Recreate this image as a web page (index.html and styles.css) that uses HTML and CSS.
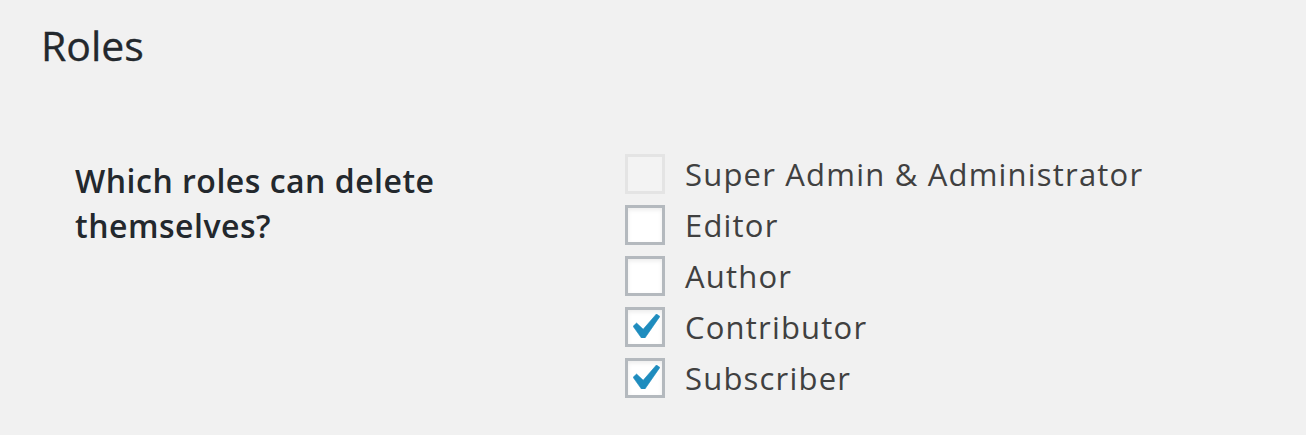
FILE: index.html
```html
<!DOCTYPE html>
<html lang="en">
<head>
<meta charset="utf-8">
<title>Roles</title>
<link rel="stylesheet" href="styles.css">
</head>
<body>
<div class="wrap">
  <h2 class="title">Roles</h2>
  <div class="form-row">
    <div class="row-label">Which roles can delete themselves?</div>
    <div class="options">
      <label class="option">
        <span class="box disabled"></span>
        <span class="opt-text">Super Admin &amp; Administrator</span>
      </label>
      <label class="option">
        <span class="box"></span>
        <span class="opt-text">Editor</span>
      </label>
      <label class="option">
        <span class="box"></span>
        <span class="opt-text">Author</span>
      </label>
      <label class="option">
        <span class="box checked"><svg class="check" viewBox="5.78 4.89 10.39 9.32" width="27" height="24"><path d="M14.83 4.89l1.34.94-5.81 8.38H9.02L5.78 9.67l1.34-1.25 2.57 2.4z"/></svg></span>
        <span class="opt-text">Contributor</span>
      </label>
      <label class="option">
        <span class="box checked"><svg class="check" viewBox="5.78 4.89 10.39 9.32" width="27" height="24"><path d="M14.83 4.89l1.34.94-5.81 8.38H9.02L5.78 9.67l1.34-1.25 2.57 2.4z"/></svg></span>
        <span class="opt-text">Subscriber</span>
      </label>
    </div>
  </div>
</div>
</body>
</html>
```
FILE: styles.css
```css
html, body {
  margin: 0;
  padding: 0;
  background: #f1f1f1;
}
body {
  font-family: "Open Sans", "Noto Sans", sans-serif;
  color: #23282d;
}
.wrap {
  padding: 0 0 0 41px;
}
.title {
  margin: 0;
  padding-top: 17px;
  font-size: 41px;
  font-weight: 400;
  line-height: 56px;
  color: #23282d;
  -webkit-text-stroke: 0.3px #23282d;
}
.form-row {
  display: flex;
  margin-top: 75px;
}
.row-label {
  width: 380px;
  padding-left: 34px;
  padding-top: 10px;
  font-size: 32px;
  font-weight: 600;
  letter-spacing: 0.5px;
  line-height: 45px;
  color: #23282d;
  box-sizing: content-box;
}
.options {
  margin-left: 170px;
  display: flex;
  flex-direction: column;
}
.option {
  display: flex;
  align-items: center;
  height: 51px;
  gap: 20px;
}
.box {
  width: 40px;
  height: 40px;
  box-sizing: border-box;
  border: 3px solid #b4b9be;
  background: #fff;
  box-shadow: inset 0 2px 4px rgba(0, 0, 0, 0.08);
  display: flex;
  align-items: center;
  justify-content: center;
  flex: none;
}
.box.disabled {
  border-color: #e4e4e4;
  background: #f3f3f3;
  box-shadow: none;
}
.check {
  fill: #1e8cbe;
  stroke: #1e8cbe;
  stroke-width: 0.25;
  margin-left: 3px;
  margin-top: -2px;
}
.opt-text {
  font-size: 31px;
  letter-spacing: 1.2px;
  line-height: 51px;
  padding-top: 2px;
  color: #404040;
  white-space: nowrap;
}
```
